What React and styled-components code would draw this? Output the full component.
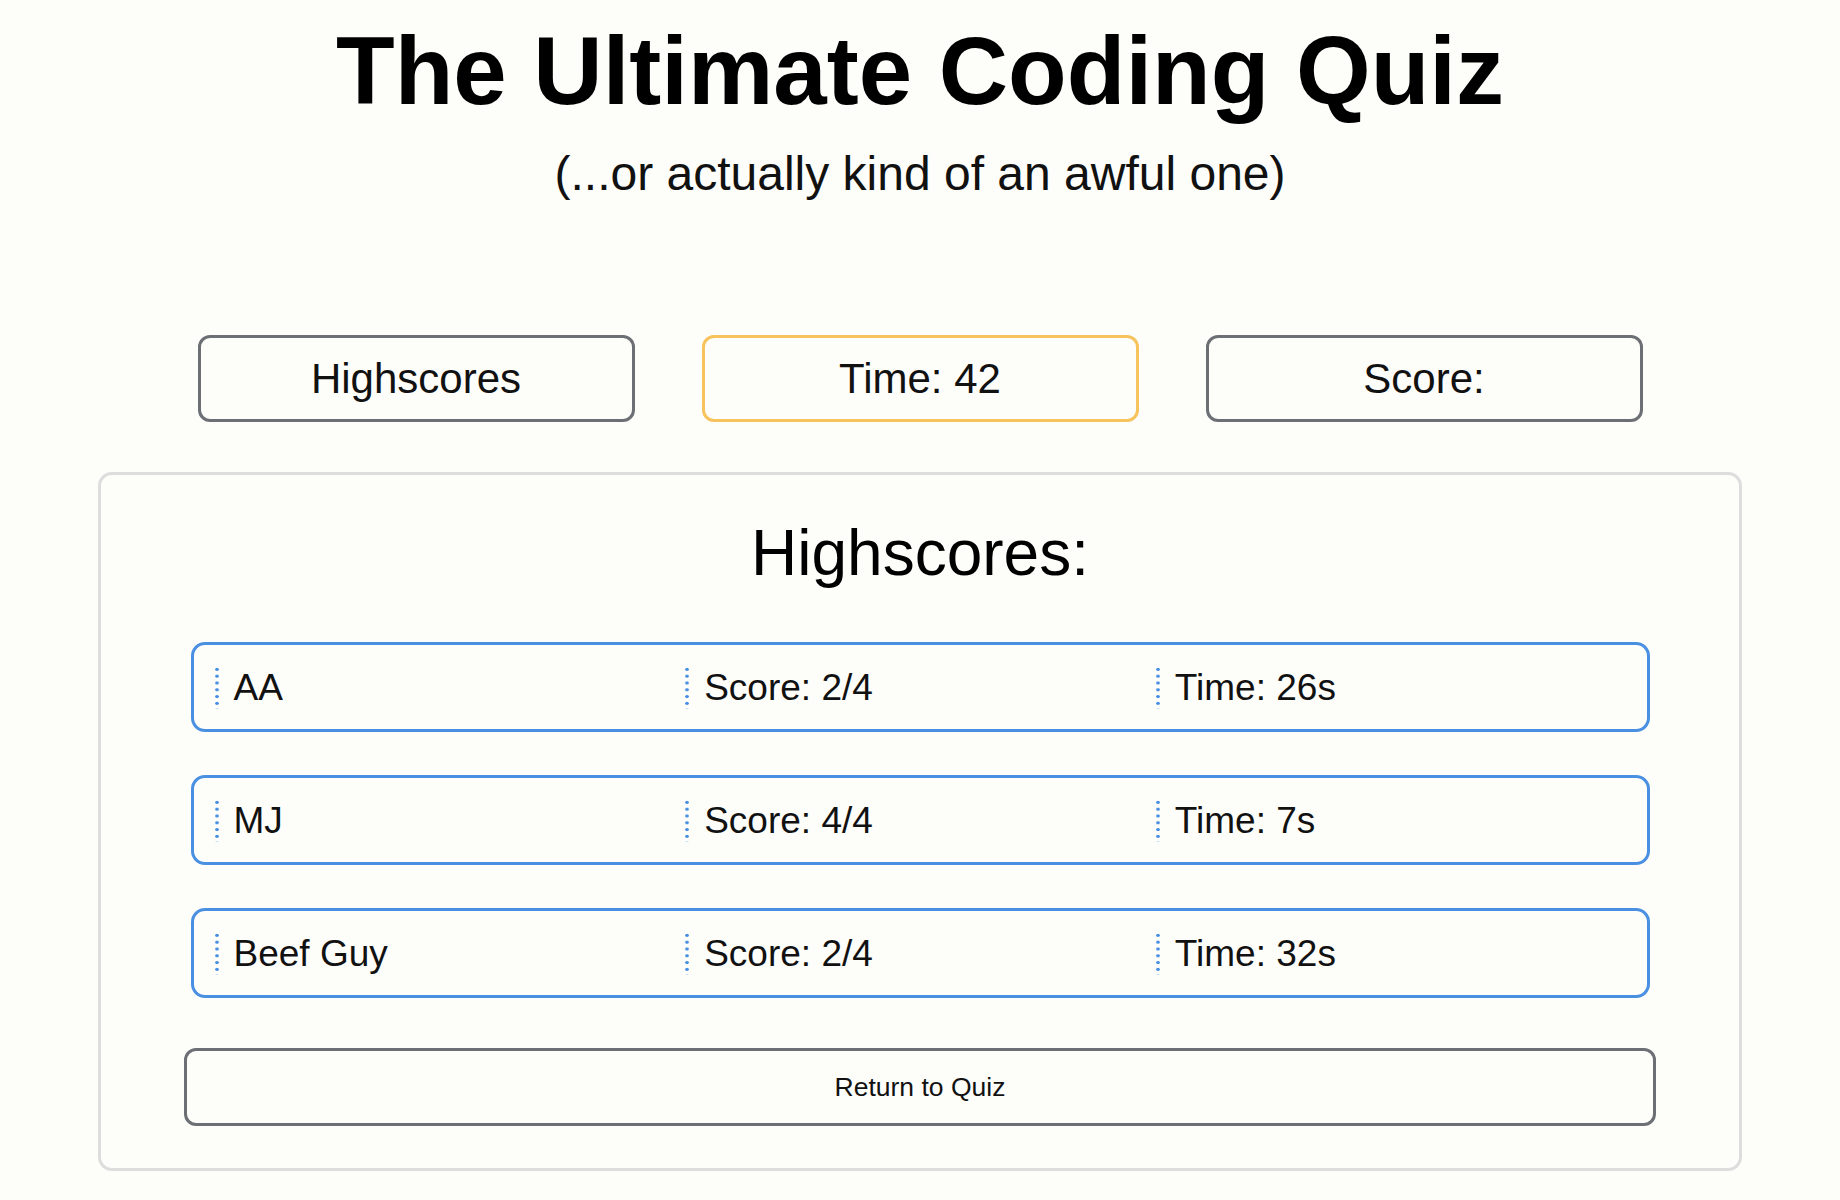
import styled, { createGlobalStyle } from "styled-components"

const GlobalStyle = createGlobalStyle`
    body {
        margin: 0;
        background-color: #fdfdfa;
        font-family: "Liberation Sans", Arial, Helvetica, sans-serif;
        color: #111;
    }
`

const scores = [
    { name: "AA", score: "2/4", time: "26s" },
    { name: "MJ", score: "4/4", time: "7s" },
    { name: "Beef Guy", score: "2/4", time: "32s" },
]

const App = () => {

    return (
        <>
            <GlobalStyle />
            <Page>
                <Header>
                    <Title>The Ultimate Coding Quiz</Title>
                    <Subtitle>(...or actually kind of an awful one)</Subtitle>
                </Header>

                <Toolbar>
                    <StatButton>Highscores</StatButton>
                    <StatButton $accent>Time: 42</StatButton>
                    <StatButton>Score:</StatButton>
                </Toolbar>

                <Card>
                    <CardTitle>Highscores:</CardTitle>
                    <List>
                        {scores.map((s) => (
                            <Row key={s.name}>
                                <Cell>{s.name}</Cell>
                                <Cell>Score: {s.score}</Cell>
                                <Cell>Time: {s.time}</Cell>
                            </Row>
                        ))}
                    </List>
                    <ReturnButton>Return to Quiz</ReturnButton>
                </Card>
            </Page>
        </>
    )
}

const Page = styled.main`
    display: flex;
    flex-direction: column;
    align-items: center;
    padding-top: 16px;
    padding-bottom: 32px;
`

const Header = styled.header`
    display: flex;
    flex-direction: column;
    align-items: center;
`

const Title = styled.h1`
    margin: 0;
    font-size: 96px;
    font-weight: 700;
    color: #000;
`

const Subtitle = styled.p`
    margin: 20px 0 0;
    font-size: 48px;
    font-weight: 300;
    color: #111;
`

const Toolbar = styled.nav`
    display: flex;
    gap: 67px;
    margin-top: 134px;
`

const StatButton = styled.button`
    box-sizing: border-box;
    width: 437px;
    height: 87px;
    border: 3px solid ${(p) => (p.$accent ? "#f6c35c" : "#6c7074")};
    border-radius: 12px;
    background: transparent;
    font-family: inherit;
    font-size: 42px;
    color: #111;
    cursor: pointer;
`

const Card = styled.section`
    box-sizing: border-box;
    display: flex;
    flex-direction: column;
    align-items: center;
    width: 1644px;
    margin-top: 50px;
    padding: 41px 0 42px;
    border: 3px solid #dddddd;
    border-radius: 14px;
`

const CardTitle = styled.h2`
    margin: 0;
    font-size: 64px;
    font-weight: 400;
    color: #000;
`

const List = styled.ul`
    display: flex;
    flex-direction: column;
    gap: 43px;
    margin: 52px 0 0;
    padding: 0;
    list-style: none;
`

const Row = styled.li`
    box-sizing: border-box;
    display: flex;
    align-items: center;
    width: 1459px;
    height: 90px;
    padding: 0 20px 0 21px;
    border: 3px solid #4a90e2;
    border-radius: 14px;
`

const Cell = styled.span`
    flex: 1;
    height: 43px;
    padding-left: 19px;
    background-image: radial-gradient(circle, #4a90e2 1.6px, transparent 1.9px);
    background-size: 4px 6.8px;
    background-repeat: repeat-y;
    background-position: 0 0;
    font-size: 37px;
    line-height: 43px;
    color: #111;
`

const ReturnButton = styled.button`
    box-sizing: border-box;
    width: 1472px;
    height: 78px;
    margin-top: 50px;
    border: 3px solid #6c7074;
    border-radius: 12px;
    background: transparent;
    font-family: inherit;
    font-size: 26.5px;
    color: #111;
    cursor: pointer;
`

export default App
